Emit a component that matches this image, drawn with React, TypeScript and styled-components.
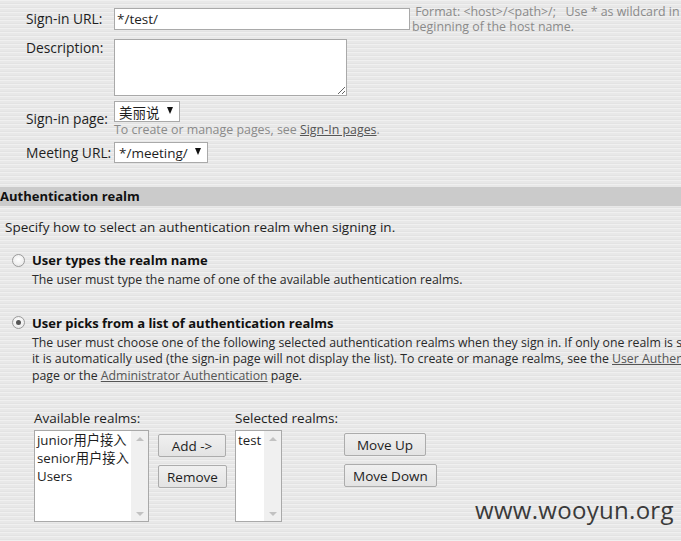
import React from "react";
import styled, { createGlobalStyle } from "styled-components";

const GlobalStyle = createGlobalStyle`
  html, body {
    margin: 0;
    padding: 0;
  }
  body {
    font-family: "Open Sans", "Noto Sans", "Noto Sans CJK SC", sans-serif;
    font-size: 12px;
    color: #1e1e1e;
    background: #e8e8e8;
    overflow: hidden;
  }
`;

const Page = styled.div`
  position: relative;
  width: 681px;
  height: 541px;
  overflow: hidden;
  background-color: #e8e8e8;
  background-image: repeating-linear-gradient(
    180deg,
    rgba(255, 255, 255, 0.35) 0px,
    rgba(255, 255, 255, 0.35) 1px,
    rgba(0, 0, 0, 0) 1px,
    rgba(0, 0, 0, 0) 3px,
    rgba(0, 0, 0, 0.025) 3px,
    rgba(0, 0, 0, 0.025) 4px
  );
`;

const FormGrid = styled.div`
  display: grid;
  grid-template-columns: 88px auto;
  row-gap: 5px;
  padding: 4px 0 0 26px;
`;

const Label = styled.div<{ $top?: boolean }>`
  align-self: ${(p) => (p.$top ? "start" : "center")};
  padding-top: ${(p) => (p.$top ? "1px" : "0")};
  font-size: 13.8px;
  line-height: 16px;
  color: #1e1e1e;
  white-space: nowrap;
`;

const FieldRow = styled.div`
  display: flex;
  align-items: center;
  gap: 2px;
`;

const FieldStack = styled.div`
  display: flex;
  flex-direction: column;
  align-items: flex-start;
`;

const TextInput = styled.input`
  box-sizing: border-box;
  width: 296px;
  height: 22px;
  padding: 1px 2px;
  border: 1px solid #a9a9a9;
  background: #fff;
  font-family: inherit;
  font-size: 13.5px;
  color: #1e1e1e;
  outline: none;
`;

const Hint = styled.div`
  align-self: flex-start;
  font-size: 12.4px;
  line-height: 15px;
  color: #8a8a8a;
  white-space: nowrap;
`;

const TextArea = styled.textarea`
  box-sizing: border-box;
  width: 233px;
  height: 57px;
  border: 1px solid #a9a9a9;
  background: #fff;
  resize: both;
  margin: 0;
  outline: none;
`;

const Select = styled.div`
  display: inline-flex;
  align-items: center;
  gap: 7px;
  box-sizing: border-box;
  height: 21px;
  padding: 0 6px 0 4px;
  border: 1px solid #a9a9a9;
  background: #fff;
  font-size: 13.5px;
  color: #1e1e1e;
`;

const Arrow = styled.span`
  width: 0;
  height: 0;
  border-left: 3px solid transparent;
  border-right: 3px solid transparent;
  border-top: 7px solid #111;
  margin-top: -3px;
`;

const SubHint = styled.div`
  font-size: 12.4px;
  line-height: 15px;
  color: #8a8a8a;
`;

const Link = styled.a`
  color: #555;
  text-decoration: underline;
`;

const SectionBar = styled.div`
  margin-top: 24px;
  height: 19px;
  line-height: 19px;
  background: #cbcbcb;
  font-weight: 700;
  font-size: 13px;
  color: #111;
`;

const Intro = styled.p`
  margin: 13px 0 0 5px;
  font-size: 13.5px;
  line-height: 16px;
  color: #1e1e1e;
`;

const Option = styled.div<{ $gap: number }>`
  margin: ${(p) => p.$gap}px 0 0 12px;
`;

const OptionHead = styled.div`
  display: flex;
  align-items: center;
  gap: 7px;
`;

const Radio = styled.span<{ $checked?: boolean }>`
  position: relative;
  box-sizing: border-box;
  width: 13px;
  height: 13px;
  border-radius: 50%;
  border: 1px solid #9a9a9a;
  background: radial-gradient(circle at 50% 40%, #ffffff 0%, #e4e4e4 100%);
  &::after {
    content: "";
    display: ${(p) => (p.$checked ? "block" : "none")};
    position: absolute;
    left: 3px;
    top: 3px;
    width: 5px;
    height: 5px;
    border-radius: 50%;
    background: #555;
  }
`;

const OptionTitle = styled.span`
  font-weight: 700;
  font-size: 13px;
  line-height: 16px;
  color: #111;
`;

const OptionText = styled.div`
  margin: 4px 0 0 20px;
  font-size: 12.3px;
  line-height: 16.5px;
  color: #2a2a2a;
  white-space: nowrap;
`;

const Realms = styled.div`
  display: grid;
  grid-template-columns: 115px 68px 47px auto;
  column-gap: 9px;
  margin: 26px 0 0 34px;
`;

const RealmLabel = styled.div<{ $col: number }>`
  grid-column: ${(p) => p.$col} / span 2;
  grid-row: 1;
  font-size: 13.5px;
  line-height: 16px;
  margin-bottom: 4px;
  white-space: nowrap;
`;

const ListBox = styled.div`
  grid-row: 2;
  display: flex;
  box-sizing: border-box;
  height: 92px;
  border: 1px solid #a9a9a9;
  background: #fff;
`;

const ListItems = styled.div`
  flex: 1;
  padding: 0 0 0 2px;
  font-size: 13.3px;
  line-height: 18px;
  white-space: nowrap;
  overflow: hidden;
`;

const ScrollTrack = styled.div`
  width: 17px;
  background: #f0f0f0;
  display: flex;
  flex-direction: column;
  justify-content: space-between;
  align-items: center;
  padding: 6px 0 5px;
  box-sizing: border-box;
`;

const ScrollArrow = styled.span<{ $down?: boolean }>`
  width: 0;
  height: 0;
  border-left: 4px solid transparent;
  border-right: 4px solid transparent;
  ${(p) =>
    p.$down ? "border-top: 4px solid #c2c2c2;" : "border-bottom: 4px solid #c2c2c2;"}
`;

const ButtonColumn = styled.div<{ $pad: number; $min: number }>`
  grid-row: 2;
  display: flex;
  flex-direction: column;
  align-items: flex-start;
  gap: 8px;
  padding-top: ${(p) => p.$pad}px;
  & > button {
    min-width: ${(p) => p.$min}px;
  }
`;

const MoveColumn = styled(ButtonColumn)`
  margin-left: 53px;
`;

const Button = styled.button`
  box-sizing: border-box;
  height: 23px;
  padding: 0 8px;
  border: 1px solid #acacac;
  border-radius: 2px;
  background: linear-gradient(#f0f0f0, #e3e3e3);
  font-family: inherit;
  font-size: 13.5px;
  color: #1e1e1e;
`;

const Watermark = styled.div`
  position: absolute;
  left: 475px;
  top: 493px;
  font-family: "Open Sans", sans-serif;
  font-size: 24px;
  color: #3a3a3a;
  letter-spacing: 0.3px;
`;

function ListPanel({ items }: { items: string[] }) {
  return (
    <ListBox>
      <ListItems>
        {items.map((i) => (
          <div key={i}>{i}</div>
        ))}
      </ListItems>
      <ScrollTrack>
        <ScrollArrow />
        <ScrollArrow $down />
      </ScrollTrack>
    </ListBox>
  );
}

export default function App() {
  return (
    <Page>
      <GlobalStyle />
      <FormGrid>
        <Label>Sign-in URL:</Label>
        <FieldRow>
          <TextInput defaultValue="*/test/" />
          <Hint>
            &nbsp;Format: &lt;host&gt;/&lt;path&gt;/;&nbsp;&nbsp; Use * as wildcard in the
            <br />
            beginning of the host name.
          </Hint>
        </FieldRow>

        <Label $top>Description:</Label>
        <FieldRow>
          <TextArea />
        </FieldRow>

        <Label>Sign-in page:</Label>
        <FieldStack>
          <Select>
            美丽说 <Arrow />
          </Select>
          <SubHint>
            To create or manage pages, see <Link>Sign-In pages</Link>.
          </SubHint>
        </FieldStack>

        <Label>Meeting URL:</Label>
        <FieldRow>
          <Select>
            */meeting/ <Arrow />
          </Select>
        </FieldRow>
      </FormGrid>

      <SectionBar>Authentication realm</SectionBar>
      <Intro>Specify how to select an authentication realm when signing in.</Intro>

      <Option $gap={17}>
        <OptionHead>
          <Radio />
          <OptionTitle>User types the realm name</OptionTitle>
        </OptionHead>
        <OptionText>The user must type the name of one of the available authentication realms.</OptionText>
      </Option>

      <Option $gap={26}>
        <OptionHead>
          <Radio $checked />
          <OptionTitle>User picks from a list of authentication realms</OptionTitle>
        </OptionHead>
        <OptionText>
          The user must choose one of the following selected authentication realms when they sign in. If only one realm is selected,
          <br />
          it is automatically used (the sign-in page will not display the list). To create or manage realms, see the{" "}
          <Link>User Authentication</Link>
          <br />
          page or the <Link>Administrator Authentication</Link> page.
        </OptionText>
      </Option>

      <Realms>
        <RealmLabel $col={1}>Available realms:</RealmLabel>
        <RealmLabel $col={3}>Selected realms:</RealmLabel>
        <ListPanel items={["junior用户接入", "senior用户接入", "Users"]} />
        <ButtonColumn $pad={4} $min={68}>
          <Button>Add -&gt;</Button>
          <Button>Remove</Button>
        </ButtonColumn>
        <ListPanel items={["test"]} />
        <MoveColumn $pad={3} $min={82}>
          <Button>Move Up</Button>
          <Button>Move Down</Button>
        </MoveColumn>
      </Realms>

      <Watermark>www.wooyun.org</Watermark>
    </Page>
  );
}
